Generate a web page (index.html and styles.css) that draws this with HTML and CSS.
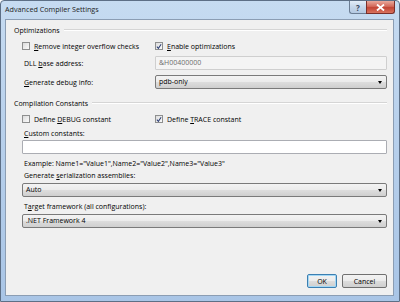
FILE: index.html
```html
<!DOCTYPE html>
<html lang="en">
<head>
    <meta charset="UTF-8">
    <title>Advanced Compiler Settings</title>
    <link rel="stylesheet" href="styles.css">
</head>
<body>
    <div class="window">
        <div class="titlebar">
            <span class="title">Advanced Compiler Settings</span>
            <div class="caption-buttons">
                <span class="cap-btn help">?</span>
                <span class="cap-btn close">
                    <svg width="9" height="7" viewBox="0 0 9 7"><path d="M1 0.5 L8 6.5 M8 0.5 L1 6.5" stroke="#fff" stroke-width="1.8"/></svg>
                </span>
            </div>
        </div>
        <div class="client">
            <div class="content">
                <div class="group-header"><span>Optimizations</span><div class="rule"></div></div>

                <div class="grid row-check">
                    <label class="check"><span class="box"></span><span><u>R</u>emove integer overflow checks</span></label>
                    <label class="check"><span class="box checked"><svg width="7" height="7" viewBox="0 0 7 7"><path d="M1 3.6 L2.8 5.6 L6 0.8" fill="none" stroke="#2b3d74" stroke-width="1.2"/></svg></span><span><u>E</u>nable optimizations</span></label>
                </div>

                <div class="grid row-field">
                    <span class="label">DLL <u>b</u>ase address:</span>
                    <div class="input disabled">&amp;H00400000</div>
                </div>

                <div class="grid row-field second">
                    <span class="label"><u>G</u>enerate debug info:</span>
                    <div class="select">pdb-only<span class="arrow"></span></div>
                </div>

                <div class="group-header group-two"><span>Compilation Constants</span><div class="rule"></div></div>

                <div class="grid row-check">
                    <label class="check"><span class="box"></span><span>Define <u>D</u>EBUG constant</span></label>
                    <label class="check"><span class="box checked"><svg width="7" height="7" viewBox="0 0 7 7"><path d="M1 3.6 L2.8 5.6 L6 0.8" fill="none" stroke="#2b3d74" stroke-width="1.2"/></svg></span><span>Define <u>T</u>RACE constant</span></label>
                </div>

                <div class="stack">
                    <span class="label"><u>C</u>ustom constants:</span>
                    <div class="input"></div>
                    <span class="label example">Example: Name1="Value1",Name2="Value2",Name3="Value3"</span>
                    <span class="label">Generate <u>s</u>erialization assemblies:</span>
                    <div class="select first">Auto<span class="arrow"></span></div>
                    <span class="label">T<u>a</u>rget framework (all configurations):</span>
                    <div class="select last">.NET Framework 4<span class="arrow"></span></div>
                </div>
            </div>

            <div class="footer">
                <button class="btn default">OK</button>
                <button class="btn">Cancel</button>
            </div>
        </div>
    </div>
</body>
</html>
```

FILE: styles.css
```css
body {
    margin: 0;
    font-family: "Open Sans", "Noto Sans", sans-serif;
    font-size: 7px;
    color: #000;
    background: #fff;
}
.window {
    width: 400px;
    height: 302px;
    box-sizing: border-box;
    border: 1px solid #5d6f86;
    border-radius: 4px 4px 0 0;
    background: linear-gradient(180deg, #c6dbf1 0%, #b9d1ec 40%, #a9c5e6 100%);
    padding: 0 5px 5px 4px;
    display: flex;
    flex-direction: column;
}
.titlebar {
    height: 18px;
    display: flex;
    justify-content: space-between;
    align-items: flex-start;
}
.title {
    margin-top: 3px;
    font-size: 7.2px;
    color: #1e1e1e;
}
.caption-buttons {
    display: flex;
    margin-right: -1px;
}
.cap-btn {
    height: 13px;
    box-sizing: border-box;
    border: 1px solid #6b7d94;
    border-top: none;
    display: flex;
    align-items: center;
    justify-content: center;
}
.help {
    width: 17px;
    border-right: none;
    border-radius: 0 0 0 3px;
    background: linear-gradient(180deg, #e3edf8, #c5d6ea 50%, #b4c9e2);
    color: #34465c;
    font-size: 8px;
    font-weight: bold;
}
.close {
    width: 29px;
    border-radius: 0 0 3px 0;
    border-color: #7a2f2a;
    background: linear-gradient(180deg, #e9a99c, #d3695a 45%, #c24535 55%, #d9735e);
}
.client {
    flex: 1;
    background: #f0f0f0;
    border: 1px solid #8b9db3;
    display: flex;
    flex-direction: column;
    justify-content: space-between;
}
.content {
    padding: 4px 6px 0 8px;
}
.group-header {
    display: flex;
    align-items: center;
    gap: 4px;
    height: 12px;
}
.rule {
    flex: 1;
    border-top: 1px solid #d5d5d5;
    border-bottom: 1px solid #fff;
}
.group-two {
    margin-top: 8px;
}
.grid {
    display: grid;
    grid-template-columns: 133px 1fr;
    align-items: center;
    padding-left: 8px;
}
.row-check {
    height: 12px;
    margin-top: 4px;
}
.row-field {
    margin-top: 4px;
}
.row-field.second {
    margin-top: 5px;
}
.row-field .label {
    padding-left: 2px;
}
.check {
    display: flex;
    align-items: center;
    gap: 4px;
}
.box {
    width: 8px;
    height: 8px;
    box-sizing: border-box;
    border: 1px solid #8e8f8f;
    background: linear-gradient(135deg, #dcdcdc, #fbfbfb);
    display: flex;
    align-items: center;
    justify-content: center;
}
.input {
    height: 14px;
    box-sizing: border-box;
    border: 1px solid #abadb3;
    border-radius: 1px;
    background: #fff;
    padding-left: 3px;
    line-height: 12px;
}
.input.disabled {
    background: #f4f4f4;
    border-color: #cfcfcf;
    color: #6d6d6d;
}
.select {
    position: relative;
    height: 14px;
    box-sizing: border-box;
    border: 1px solid #7a7a7a;
    border-radius: 2px;
    background: linear-gradient(180deg, #f3f3f3 0%, #ebebeb 50%, #dddddd 51%, #cfcfcf 100%);
    padding-left: 3px;
    line-height: 12px;
}
.arrow {
    position: absolute;
    right: 4px;
    top: 5px;
    border-left: 2.5px solid transparent;
    border-right: 2.5px solid transparent;
    border-top: 3px solid #000;
}
.stack {
    display: flex;
    flex-direction: column;
    padding-left: 8px;
    margin-top: 3px;
}
.stack .label {
    height: 12px;
    line-height: 12px;
    padding-left: 2px;
}
.stack .example {
    margin-top: 4px;
}
.stack .select.first {
    margin-top: 1px;
    margin-bottom: 4px;
}
.stack .select.last {
    margin-top: 1px;
}
.footer {
    display: flex;
    justify-content: flex-end;
    gap: 5px;
    padding: 0 6px 7px 0;
}
.btn {
    height: 14px;
    box-sizing: border-box;
    border: 1px solid #707070;
    border-radius: 2px;
    background: linear-gradient(180deg, #f2f2f2 0%, #ebebeb 50%, #dddddd 51%, #cfcfcf 100%);
    font-family: inherit;
    font-size: 7px;
    padding: 0;
    width: 45px;
}
.btn.default {
    width: 30px;
    border-color: #3c7fb1;
    box-shadow: inset 0 0 0 1px #a4d8f5;
}
```
